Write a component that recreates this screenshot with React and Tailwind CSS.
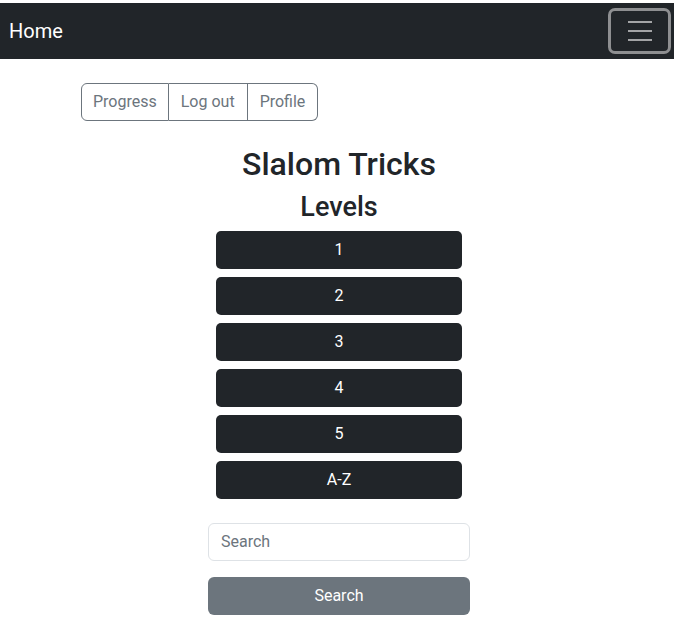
import React from 'react'

const levels = ['1', '2', '3', '4', '5', 'A-Z']

export default function App() {
  return (
    <div className="min-h-screen bg-white text-[#212529] font-['Roboto',sans-serif] pt-[3px]">
      {/* Navbar */}
      <nav className="h-[56px] bg-[#212529] flex items-center justify-between pl-[9px] pr-[3px]">
        <span className="text-[20px] text-white leading-none">Home</span>
        <button className="w-[63px] h-[46px] rounded-[7px] border-[3px] border-[#8e8f91] flex items-center justify-center">
          <svg width="26" height="22" viewBox="0 0 26 22">
            <path d="M1 2h24M1 11h24M1 20h24" stroke="#a3a4a6" strokeWidth="2" />
          </svg>
        </button>
      </nav>

      <div className="pl-[81px] pt-[24px]">
        <div className="inline-flex text-[16px] text-[#6c757d]">
          <button className="h-[38px] px-[11px] border border-[#6c757d] rounded-l-[6px]">Progress</button>
          <button className="h-[38px] px-[12px] border border-l-0 border-[#6c757d]">Log out</button>
          <button className="h-[38px] px-[12px] border border-l-0 border-[#6c757d] rounded-r-[6px]">Profile</button>
        </div>
      </div>

      <div className="flex flex-col items-center pl-[4px]">
        <h1 className="mt-[24px] text-[32px] font-medium leading-[1.2] mb-[8px]">Slalom Tricks</h1>
        <h2 className="text-[27px] font-medium leading-[1.2] mb-[7px]">Levels</h2>
        <div className="flex flex-col gap-[8px] w-[246px]">
          {levels.map(l => (
            <button key={l} className="h-[38px] rounded-[5px] bg-[#212529] text-white text-[16px]">{l}</button>
          ))}
        </div>
        <div className="w-[262px] mt-[24px] flex flex-col gap-[16px]">
          <input
            placeholder="Search"
            className="h-[38px] px-[12px] border border-[#dee2e6] rounded-[6px] text-[16px] placeholder-[#6c757d] outline-none"
          />
          <button className="h-[38px] rounded-[6px] bg-[#6c757d] text-white text-[16px]">Search</button>
        </div>
      </div>
    </div>
  )
}
